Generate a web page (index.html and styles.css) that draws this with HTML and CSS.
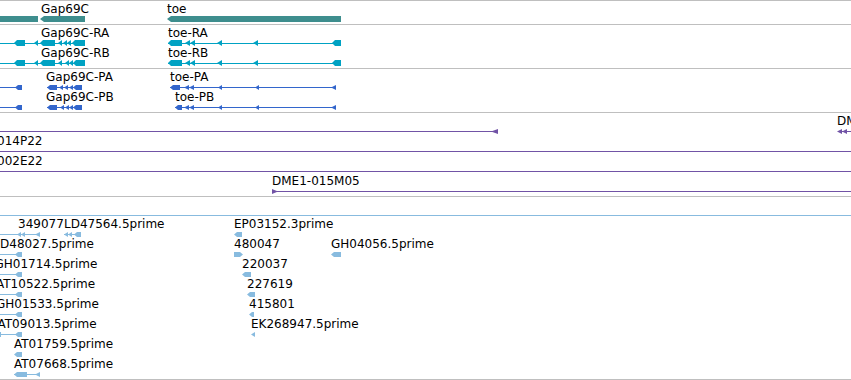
FILE: index.html
```html
<!DOCTYPE html>
<html lang="en">
<head>
    <meta charset="UTF-8">
    <meta name="viewport" content="width=device-width, initial-scale=1.0">
    <title>Gap69C / toe region</title>
    <link rel="stylesheet" href="styles.css">
</head>
<body>
    <div class="panel">
        <!-- genes -->
        <div class="track track-gene">
            <svg class="canvas" width="851" height="23" xmlns="http://www.w3.org/2000/svg">
                <g class="gene">
                    <rect x="0" y="15" width="38" height="6"></rect>
                    <polygon points="40,18 44,15 85,15 85,21 44,21"></polygon>
                    <polygon points="167,18 171,15 341,15 341,21 171,21"></polygon>
                </g>
                <text class="label" x="41" y="12">Gap69C</text>
                <text class="label" x="167" y="12">toe</text>
            </svg>
        </div>

        <!-- transcripts -->
        <div class="track track-mrna">
            <svg class="canvas" width="851" height="43" xmlns="http://www.w3.org/2000/svg">
                <g class="mrna">
                    <line x1="0" y1="18.5" x2="85" y2="18.5"></line>
                    <polygon points="14,18 17,15 25,15 25,21 17,21"></polygon>
                    <polygon points="34,18 38,15 38,21"></polygon>
                    <polygon points="40,18 43,15 55,15 55,21 43,21"></polygon>
                    <polygon points="58,18 62,15 62,21"></polygon>
                    <polygon points="63,18 67,15 67,21"></polygon>
                    <polygon points="67,18 71,15 71,21"></polygon>
                    <polygon points="72,18 75,15 85,15 85,21 75,21"></polygon>

                    <line x1="168" y1="18.5" x2="341" y2="18.5"></line>
                    <polygon points="168,18 171,15 182,15 182,21 171,21"></polygon>
                    <polygon points="185,18 190,15 190,21"></polygon>
                    <polygon points="190,18 195,15 195,21"></polygon>
                    <polygon points="217,18 222,15 222,21"></polygon>
                    <polygon points="253,18 258,15 258,21"></polygon>
                    <polygon points="332,18 335,15 341,15 341,21 335,21"></polygon>

                    <line x1="0" y1="38.5" x2="85" y2="38.5"></line>
                    <polygon points="14,38 17,35 25,35 25,41 17,41"></polygon>
                    <polygon points="34,38 38,35 38,41"></polygon>
                    <polygon points="40,38 43,35 55,35 55,41 43,41"></polygon>
                    <polygon points="58,38 62,35 62,41"></polygon>
                    <polygon points="65,38 69,35 69,41"></polygon>
                    <polygon points="69,38 73,35 73,41"></polygon>
                    <polygon points="73,38 76,35 85,35 85,41 76,41"></polygon>

                    <line x1="168" y1="38.5" x2="341" y2="38.5"></line>
                    <polygon points="168,38 171,35 182,35 182,41 171,41"></polygon>
                    <polygon points="185,38 190,35 190,41"></polygon>
                    <polygon points="190,38 195,35 195,41"></polygon>
                    <polygon points="217,38 222,35 222,41"></polygon>
                    <polygon points="253,38 258,35 258,41"></polygon>
                    <polygon points="332,38 335,35 341,35 341,41 335,41"></polygon>
                </g>
                <text class="label" x="41" y="12">Gap69C-RA</text>
                <text class="label" x="168" y="12">toe-RA</text>
                <text class="label" x="41" y="32">Gap69C-RB</text>
                <text class="label" x="168" y="32">toe-RB</text>
            </svg>
        </div>

        <!-- proteins -->
        <div class="track track-protein">
            <svg class="canvas" width="851" height="43" xmlns="http://www.w3.org/2000/svg">
                <g class="protein">
                    <line x1="0" y1="18.5" x2="22" y2="18.5"></line>
                    <polygon points="15,18.5 18,16 22,16 22,21 18,21"></polygon>
                    <line x1="47" y1="18.5" x2="82" y2="18.5"></line>
                    <polygon points="47,18.5 50,16 57,16 57,21 50,21"></polygon>
                    <polygon points="59,18.5 63,16 63,21"></polygon>
                    <polygon points="64,18.5 68,16 68,21"></polygon>
                    <polygon points="69,18.5 73,16 73,21"></polygon>
                    <polygon points="73,18.5 76,16 82,16 82,21 76,21"></polygon>
                    <line x1="170" y1="18.5" x2="336" y2="18.5"></line>
                    <polygon points="170,18.5 173,16 180,16 180,21 173,21"></polygon>
                    <polygon points="184,18.5 189,16 189,21"></polygon>
                    <polygon points="189,18.5 194,16 194,21"></polygon>
                    <polygon points="218,18.5 222,16 222,21"></polygon>
                    <polygon points="255,18.5 259,16 259,21"></polygon>
                    <polygon points="331,18.5 336,16 336,21"></polygon>

                    <line x1="0" y1="38.5" x2="22" y2="38.5"></line>
                    <polygon points="15,38.5 18,36 22,36 22,41 18,41"></polygon>
                    <line x1="47" y1="38.5" x2="82" y2="38.5"></line>
                    <polygon points="47,38.5 50,36 57,36 57,41 50,41"></polygon>
                    <polygon points="60,38.5 64,36 64,41"></polygon>
                    <polygon points="65,38.5 69,36 69,41"></polygon>
                    <polygon points="69,38.5 73,36 73,41"></polygon>
                    <polygon points="73,38.5 76,36 82,36 82,41 76,41"></polygon>
                    <line x1="175" y1="38.5" x2="336" y2="38.5"></line>
                    <polygon points="175,38.5 178,36 182,36 182,41 178,41"></polygon>
                    <polygon points="184,38.5 189,36 189,41"></polygon>
                    <polygon points="189,38.5 194,36 194,41"></polygon>
                    <polygon points="218,38.5 222,36 222,41"></polygon>
                    <polygon points="255,38.5 259,36 259,41"></polygon>
                    <polygon points="331,38.5 336,36 336,41"></polygon>
                </g>
                <text class="label" x="46" y="12">Gap69C-PA</text>
                <text class="label" x="170" y="12">toe-PA</text>
                <text class="label" x="46" y="32">Gap69C-PB</text>
                <text class="label" x="175" y="32">toe-PB</text>
            </svg>
        </div>

        <!-- BAC clones -->
        <div class="track track-clone">
            <svg class="canvas" width="851" height="83" xmlns="http://www.w3.org/2000/svg">
                <g class="clone">
                    <line x1="0" y1="18.5" x2="497" y2="18.5"></line>
                    <polygon points="491,18.5 498,16 498,21"></polygon>
                    <polygon points="837,18.5 842,16 842,21"></polygon>
                    <polygon points="842,18.5 847,16 847,21"></polygon>
                    <line x1="842" y1="18.5" x2="851" y2="18.5"></line>
                    <line x1="0" y1="38.5" x2="851" y2="38.5"></line>
                    <line x1="0" y1="58.5" x2="851" y2="58.5"></line>
                    <line x1="272" y1="78.5" x2="851" y2="78.5"></line>
                    <polygon points="272,76 272,81 278,78.5"></polygon>
                </g>
                <text class="label" x="837" y="12">DM</text>
                <text class="label" x="-3" y="32">014P22</text>
                <text class="label" x="-3" y="52">002E22</text>
                <text class="label" x="272" y="72">DME1-015M05</text>
            </svg>
        </div>

        <!-- ESTs -->
        <div class="track track-est">
            <svg class="canvas" width="851" height="182" xmlns="http://www.w3.org/2000/svg">
                <g class="est">
                    <line x1="0" y1="18.5" x2="851" y2="18.5"></line>

                    <line x1="0" y1="37.5" x2="40" y2="37.5"></line>
                    <polygon points="17,37.5 21,35 21,40"></polygon>
                    <polygon points="21,37.5 25,35 25,40"></polygon>
                    <polygon points="35,37.5 40,35 40,40"></polygon>
                    <line x1="64" y1="37.5" x2="81" y2="37.5"></line>
                    <polygon points="64,37.5 68,35 68,40"></polygon>
                    <polygon points="68,37.5 72,35 72,40"></polygon>
                    <polygon points="74,37.5 77,35 81,35 81,40 77,40"></polygon>
                    <polygon points="234,37.5 237,35 242,35 242,40 237,40"></polygon>

                    <line x1="0" y1="57.5" x2="22" y2="57.5"></line>
                    <polygon points="15,57.5 18,55 22,55 22,60 18,60"></polygon>
                    <polygon points="234,55 240,55 243,57.5 240,60 234,60"></polygon>
                    <polygon points="331,57.5 334,55 341,55 341,60 334,60"></polygon>

                    <line x1="0" y1="77.5" x2="22" y2="77.5"></line>
                    <polygon points="15,77.5 18,75 22,75 22,80 18,80"></polygon>
                    <polygon points="242,77.5 245,75 251,75 251,80 245,80"></polygon>

                    <line x1="0" y1="97.5" x2="22" y2="97.5"></line>
                    <polygon points="15,97.5 18,95 22,95 22,100 18,100"></polygon>
                    <polygon points="247,97.5 250,95 255,95 255,100 250,100"></polygon>

                    <line x1="0" y1="117.5" x2="22" y2="117.5"></line>
                    <polygon points="15,117.5 18,115 22,115 22,120 18,120"></polygon>
                    <polygon points="249,117.5 252,115 254,115 254,120 252,120"></polygon>

                    <line x1="0" y1="137.5" x2="22" y2="137.5"></line>
                    <line x1="0.5" y1="135" x2="0.5" y2="140"></line>
                    <polygon points="15,137.5 18,135 22,135 22,140 18,140"></polygon>
                    <polygon points="251,137.5 255,135 255,140"></polygon>

                    <polygon points="14,157.5 17,155 22,155 22,160 17,160"></polygon>

                    <line x1="14" y1="177.5" x2="40" y2="177.5"></line>
                    <polygon points="14,177.5 17,175 27,175 27,180 17,180"></polygon>
                    <polygon points="35,177.5 40,175 40,180"></polygon>
                </g>
                <text class="label" x="18" y="31">349077</text>
                <text class="label" x="64" y="31">LD47564.5prime</text>
                <text class="label" x="234" y="31">EP03152.3prime</text>
                <text class="label" x="0" y="51">D48027.5prime</text>
                <text class="label" x="234" y="51">480047</text>
                <text class="label" x="331" y="51">GH04056.5prime</text>
                <text class="label" x="-5.5" y="71">GH01714.5prime</text>
                <text class="label" x="242" y="71">220037</text>
                <text class="label" x="-4" y="91">AT10522.5prime</text>
                <text class="label" x="247" y="91">227619</text>
                <text class="label" x="-4" y="111">GH01533.5prime</text>
                <text class="label" x="249" y="111">415801</text>
                <text class="label" x="-2.5" y="131">AT09013.5prime</text>
                <text class="label" x="251" y="131">EK268947.5prime</text>
                <text class="label" x="14" y="151">AT01759.5prime</text>
                <text class="label" x="14" y="171">AT07668.5prime</text>
            </svg>
        </div>
    </div>
</body>
</html>
```

FILE: styles.css
```css
*{
    margin: 0;
    padding: 0;
}
body{
    background-color: #fff;
    width: 851px;
    height: 380px;
    overflow: hidden;
}
.panel{
    width: 851px;
    border-top: 1px solid #bfbfbf;
}
.track{
    border-bottom: 1px solid #bfbfbf;
    overflow: hidden;
}
.track-gene{
    height: 23px;
}
.track-mrna,
.track-protein{
    height: 43px;
}
.track-clone{
    height: 83px;
}
.track-est{
    height: 182px;
}
.canvas{
    display: block;
    overflow: hidden;
}
.canvas line{
    stroke-width: 1;
    shape-rendering: crispEdges;
}
.label{
    font-family: "DejaVu Sans", "Liberation Sans", sans-serif;
    font-size: 12px;
    fill: #000;
}
.gene{
    fill: #3e8e8e;
}
.mrna{
    fill: #00a2c3;
    stroke: #00a2c3;
}
.protein{
    fill: #3366cc;
    stroke: #3366cc;
}
.clone{
    fill: #7153a6;
    stroke: #7153a6;
}
.est{
    fill: #88bbdf;
    stroke: #88bbdf;
}
.mrna polygon,
.protein polygon,
.clone polygon,
.est polygon{
    stroke: none;
}
```
